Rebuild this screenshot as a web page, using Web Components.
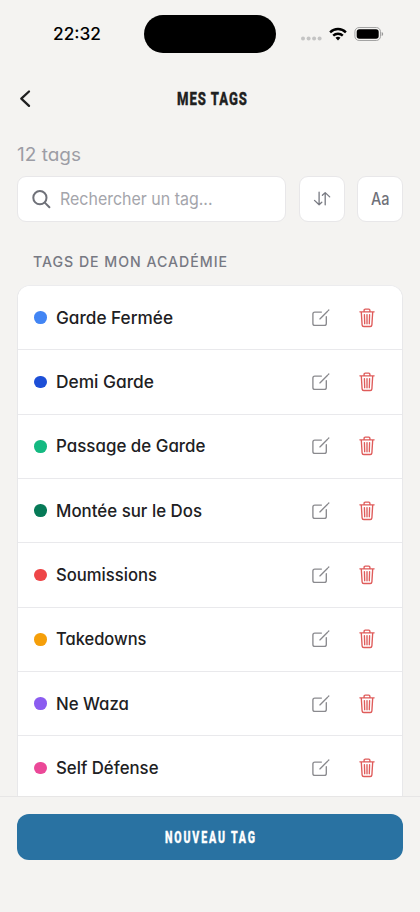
<!DOCTYPE html>
<html lang="fr">
<head>
<meta charset="utf-8">
<title>Mes tags</title>
<style>
html, body { margin: 0; height: 100%; overflow: hidden; background: #f4f3f1; }
body { font-family: Inter, "Liberation Sans", sans-serif; color: #202022; }
</style>
</head>
<body>
<tags-app></tags-app>
<script>
const define = (name, html, setup) => {
  const template = document.createElement('template');
  template.innerHTML = html;
  customElements.define(name, class extends HTMLElement {
    constructor() {
      super();
      this.attachShadow({ mode: 'open' }).append(template.content.cloneNode(true));
    }
    connectedCallback() { if (setup) setup(this, this.shadowRoot); }
  });
};

// One line of text whose glyphs are stretched to the width given in pixels.
define('fit-text', `<style>
  :host { display: block; flex: none; white-space: nowrap; }
  span { display: inline-block; transform-origin: 0 50%; }
</style><span><slot></slot></span>`, (el, root) => {
  const span = root.querySelector('span');
  const width = Number(el.getAttribute('width'));
  el.style.width = width + 'px';
  span.style.transform = 'none';
  const spacing = parseFloat(getComputedStyle(span).letterSpacing) || 0;
  const natural = span.getBoundingClientRect().width - spacing;
  if (natural > 0) span.style.transform = 'scaleX(' + width / natural + ')';
});

define('status-bar', `<style>
  :host { display: grid; grid-template-columns: 144px 132px 1fr; height: 68px; align-items: center; color: #000; box-sizing: border-box; }
  fit-text { font: 550 17px/22px Inter, sans-serif; margin-left: 53px; }
  .island { height: 38.5px; border-radius: 20px; background: #000; }
  .signs { display: flex; align-items: center; padding-left: 25px; }
  svg { display: block; flex: none; }
</style>
<fit-text width="48">22:32</fit-text>
<div class="island"></div>
<div class="signs">
  <svg width="86" height="20" viewBox="301 24 86 20" fill="none">
    <g fill="#c4c4c4"><circle cx="303" cy="38.6" r="2"/><circle cx="308.6" cy="38.6" r="2"/><circle cx="314.1" cy="38.6" r="2"/><circle cx="319.6" cy="38.6" r="2"/></g>
    <g stroke="#000" stroke-width="2.4"><path d="M330.1 32.3a11.2 11.2 0 0 1 15.8 0"/><path d="M333.2 35.7a6.9 6.9 0 0 1 9.6 0"/></g>
    <path d="M335.5 37.8a3.7 3.7 0 0 1 5 0L338 40.4z" fill="#000"/>
    <rect x="354.9" y="27.5" width="25.6" height="13" rx="4.2" stroke="#a3a3a3"/>
    <rect x="356.7" y="29.2" width="22" height="9.6" rx="2.7" fill="#000"/>
    <path d="M381.7 32v4.2q1.5-.5 1.5-2.1t-1.5-2.1" fill="#999"/>
  </svg>
</div>`);

define('nav-header', `<style>
  :host { display: grid; grid-template-columns: 1fr auto 1fr; align-items: center; height: 63px; }
  svg { display: block; margin: -2px 0 0 18px; }
  fit-text { font: 800 18.5px/24px Roboto, sans-serif; letter-spacing: 1.4px; color: #202020; margin: -1px -1.5px 0 1.5px; -webkit-text-stroke: .35px currentColor; }
</style>
<svg width="14" height="20" viewBox="0 0 14 20" fill="none" stroke="#202020" stroke-width="2.3" stroke-linecap="round" stroke-linejoin="round"><path d="M11 2.5 3.3 9.7l7.7 7.2"/></svg>
<fit-text width="70"><slot></slot></fit-text>`);

define('search-field', `<style>
  :host { display: flex; flex: 1; align-items: center; gap: 9px; height: 46px; box-sizing: border-box; padding-left: 14px; background: #fff; border: 1px solid #e8e7e9; border-radius: 9px; }
  fit-text { font: 400 17px/22px Inter, sans-serif; color: #a4a5ab; }
  svg { display: block; flex: none; }
</style>
<svg width="19" height="19" viewBox="0 0 19 19" fill="none" stroke="#6f7179" stroke-width="2" stroke-linecap="round"><circle cx="7.9" cy="7.7" r="6.6"/><path d="m12.8 12.6 4.6 4.6"/></svg>
<fit-text width="152.5"><slot></slot></fit-text>`);

define('tool-button', `<style>
  :host { display: flex; flex: none; align-items: center; justify-content: center; width: 46px; height: 46px; box-sizing: border-box; background: #fff; border: 1px solid #e8e7e9; border-radius: 9px; color: #6f7179; font: 500 17px/22px Inter, sans-serif; }
</style><slot></slot>`);

define('tag-row', `<style>
  :host { display: flex; align-items: center; height: 64.35px; box-sizing: border-box; padding: 0 27px 0 16px; border-top: 1px solid #e9e9ec; background: #fff; }
  :host(:first-child) { border-top-color: transparent; }
  i { flex: none; width: 12.6px; height: 12.6px; border-radius: 50%; margin-right: 9px; }
  fit-text { font: 530 17px/24px Inter, sans-serif; font-feature-settings: "cv11"; color: #202022; }
  .actions { display: flex; align-items: center; gap: 29px; margin-left: auto; }
  svg { display: block; }
</style>
<i></i><fit-text><slot></slot></fit-text>
<div class="actions">
  <svg width="18" height="20" viewBox="0 0 18 20" fill="none" stroke="#8a8a8e" stroke-width="1.35" stroke-linecap="round" stroke-linejoin="round"><path d="M9.4 4.1H2.8Q.9 4.1.9 6v9.4q0 1.9 1.9 1.9h9.6q1.9 0 1.9-1.9V8.7M7.9 10.9l7.7-7.7M16.5 2.3l.3-.3"/></svg>
  <svg width="16" height="20" viewBox="0 0 16 20" fill="none" stroke="#df5b5a" stroke-width="1.35" stroke-linecap="round" stroke-linejoin="round"><path d="M.9 3.8h14.2M5.1 3.6V2.2q0-1.1 1.1-1.1h3.6q1.1 0 1.1 1.1v1.4M2.3 4l.8 12.9q.1 1.6 1.7 1.6h6.4q1.6 0 1.7-1.6L13.7 4M5.4 6.6l.3 9.1M8 6.6v9.1M10.6 6.6l-.3 9.1"/></svg>
</div>`, (el, root) => {
  root.querySelector('i').style.background = el.getAttribute('color');
});

// Label, dot colour and label width.
const rows = [
  ['Garde Fermée', '#4285f4', 117],
  ['Demi Garde', '#1d4fd7', 98],
  ['Passage de Garde', '#14b981', 149.5],
  ['Montée sur le Dos', '#067a57', 146],
  ['Soumissions', '#ee4648', 101],
  ['Takedowns', '#f59f0a', 90.5],
  ['Ne Waza', '#8b5cf0', 73],
  ['Self Défense', '#eb4898', 102.5]
];

define('tag-list', `<style>
  :host { display: block; box-sizing: border-box; margin: 0 17px; border: 1px solid #e8e8ea; border-top-color: #ececee; border-radius: 13px 13px 0 0; border-bottom: 0; overflow: hidden; background: #fff; }
  div { margin-top: -1px; }
</style><div></div>`, (el, root) => {
  const holder = root.querySelector('div');
  for (const [label, color, width] of rows) {
    const row = document.createElement('tag-row');
    row.setAttribute('color', color);
    row.textContent = label;
    row.shadowRoot.querySelector('fit-text').setAttribute('width', width);
    holder.append(row);
  }
});

define('action-footer', `<style>
  :host { display: block; flex: none; height: 116px; box-sizing: border-box; padding: 17px 17px 0; border-top: 1px solid #e7e6e6; background: #f4f3f1; }
  button { display: flex; align-items: center; justify-content: center; width: 100%; height: 46px; padding: 0; border: 0; border-radius: 12px; background: #2972a2; color: #fff; }
  fit-text { font: 800 16px/22px Roboto, sans-serif; letter-spacing: 2.8px; text-align: left; margin-top: 2px; -webkit-text-stroke: .4px currentColor; }
</style>
<button><fit-text width="90"><slot></slot></fit-text></button>`);

define('tags-app', `<style>
  :host { display: flex; flex-direction: column; height: 912px; width: 420px; overflow: hidden; background: #f4f3f1; }
  main { flex: 1; min-height: 0; overflow: hidden; }
  .count { font: 400 18px/24px Inter, sans-serif; font-feature-settings: "cv11"; color: #9c9da5; margin: 12px 0 9px 17px; }
  .tools { display: flex; gap: 12.5px; padding: 0 17px; }
  .section { font: 500 14.3px/20px Inter, sans-serif; letter-spacing: 1px; color: #777983; margin: 30px 0 13px 33px; }
</style>
<status-bar></status-bar>
<nav-header>MES TAGS</nav-header>
<main>
  <fit-text class="count" width="64">12 tags</fit-text>
  <div class="tools">
    <search-field>Rechercher un tag...</search-field>
    <tool-button><svg width="18" height="16" viewBox="0 0 18 16" fill="none" stroke="#777981" stroke-width="1.3" stroke-linecap="round" stroke-linejoin="round"><path d="M6.1 1.2v12.6M1.5 9.4l4.6 4.4 2.7-2.6M12.2 13.8V1.6M9.4 4.3l2.8-2.7 4.5 4.3"/></svg></tool-button>
    <tool-button><fit-text width="18.5">Aa</fit-text></tool-button>
  </div>
  <fit-text class="section" width="194">TAGS DE MON ACADÉMIE</fit-text>
  <tag-list></tag-list>
</main>
<action-footer>NOUVEAU TAG</action-footer>
</tags-app>`);
</script>
</body>
</html>
